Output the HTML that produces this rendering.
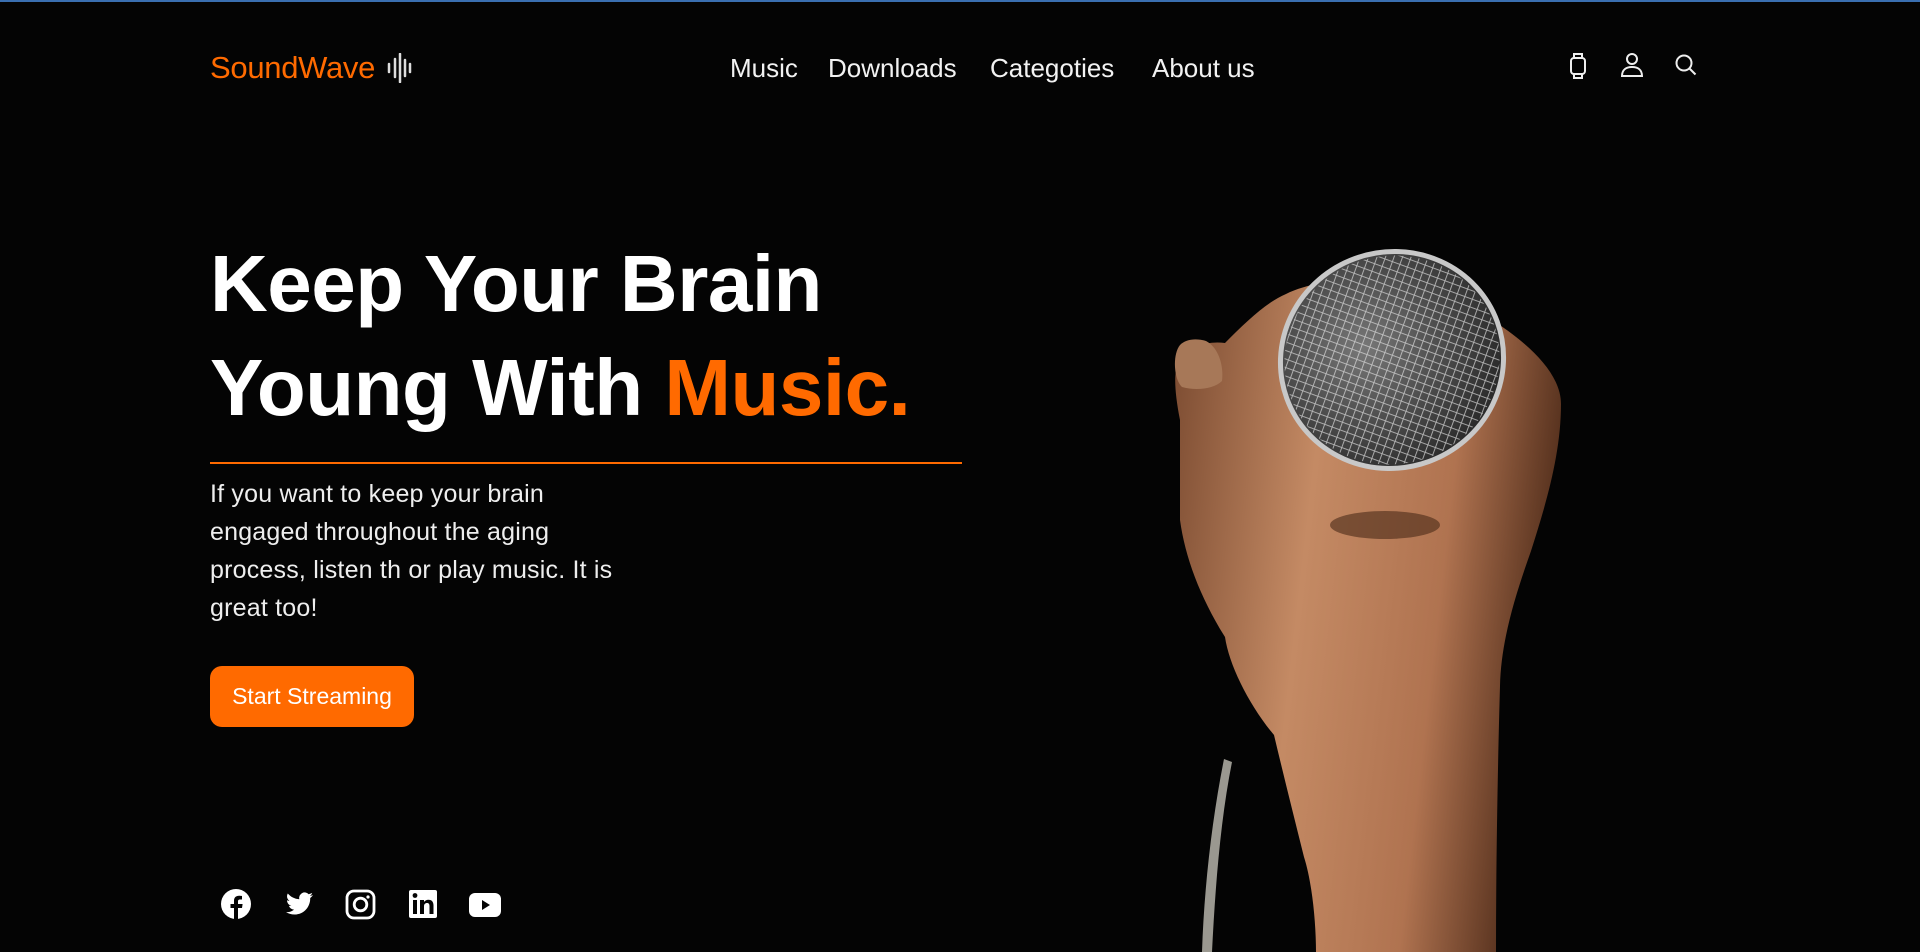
<!DOCTYPE html>
<html><head><meta charset="utf-8"><style>
*{margin:0;padding:0;box-sizing:border-box}
body{width:1920px;height:952px;background:#040404;overflow:hidden;position:relative;font-family:"Liberation Sans",sans-serif;color:#fff}
.top{position:absolute;top:0;left:0;width:1920px;height:2px;background:#3a6fb0}
.logo{position:absolute;left:210px;top:50px;font-size:31px;color:#ff6a00;letter-spacing:-0.3px}
.nav{position:absolute;top:53px;font-size:26px;color:#f2f2f2}
h1{position:absolute;left:210px;top:232px;font-size:80px;line-height:104px;font-weight:bold;letter-spacing:-0.5px}
h1 span{color:#ff6a00}
.line{position:absolute;left:210px;top:462px;width:752px;height:2px;background:#ff6a00}
p{position:absolute;left:210px;top:475px;font-size:25px;line-height:38px;color:#eee;white-space:nowrap;letter-spacing:0.2px}
.btn{position:absolute;left:210px;top:666px;width:204px;height:61px;background:#ff6a00;border-radius:12px;font-size:23px;line-height:61px;text-align:center}
svg{position:absolute}
</style></head><body>
<div class="top"></div>
<div class="logo">SoundWave</div>
<svg style="left:386px;top:53px" width="26" height="30" viewBox="0 0 26 30"><g stroke="#ddd" stroke-width="2.5" stroke-linecap="round"><line x1="3" y1="11" x2="3" y2="19"/><line x1="9" y1="6" x2="9" y2="24"/><line x1="14" y1="1" x2="14" y2="29"/><line x1="19" y1="7" x2="19" y2="23"/><line x1="24" y1="11" x2="24" y2="19"/></g></svg>
<div class="nav" style="left:730px">Music</div>
<div class="nav" style="left:828px">Downloads</div>
<div class="nav" style="left:990px">Categoties</div>
<div class="nav" style="left:1152px">About us</div>
<svg style="left:1568px;top:52px" width="22" height="28" viewBox="0 0 22 28" fill="none" stroke="#eee" stroke-width="2"><rect x="3" y="6" width="14" height="16" rx="3"/><path d="M6 6V2h8v4M6 22v4h8v-4"/></svg>
<svg style="left:1620px;top:52px" width="24" height="26" viewBox="0 0 24 26" fill="none" stroke="#eee" stroke-width="2"><circle cx="12" cy="7" r="5"/><path d="M2 24c0-6 4-9 10-9s10 3 10 9z"/></svg>
<svg style="left:1674px;top:53px" width="24" height="24" viewBox="0 0 24 24" fill="none" stroke="#eee" stroke-width="2"><circle cx="10" cy="10" r="7.5"/><path d="M15.5 15.5l6 6"/></svg>
<h1>Keep Your Brain<br>Young With <span>Music.</span></h1>
<div class="line"></div>
<p>If you want to keep your brain<br>engaged throughout the aging<br>process, listen th or play music. It is<br>great too!</p>
<div class="btn">Start Streaming</div>
<svg style="left:221px;top:889px" width="300" height="32" viewBox="0 0 300 32" fill="#fff">
<circle cx="15" cy="15" r="15"/><path d="M17 30V19h4l.6-4H17v-2.5c0-1.2.4-2 2-2h2V7c-.5 0-1.8-.2-3-.2-3 0-5 1.8-5 5V15H9.5v4H13v11z" fill="#040404"/>
<path d="M92 6c-1 .5-2 .8-3.2.9 1.2-.7 2-1.8 2.4-3-1 .6-2.3 1-3.5 1.3a5.5 5.5 0 0 0-9.4 5C73.7 10 69.6 7.8 66.8 4.5c-1.5 2.6-.7 5.8 1.7 7.4-.9 0-1.7-.3-2.5-.7 0 2.7 1.9 5 4.4 5.5-.8.2-1.7.3-2.5.1.7 2.2 2.8 3.8 5.2 3.8A11 11 0 0 1 65 23c2.5 1.6 5.4 2.5 8.4 2.5 10.2 0 15.8-8.5 15.8-15.8v-.7C90.3 8.3 91.3 7.2 92 6z"/>
<rect x="126" y="2" width="27" height="27" rx="7" fill="none" stroke="#fff" stroke-width="2.8"/><circle cx="139.5" cy="15.5" r="6.3" fill="none" stroke="#fff" stroke-width="2.8"/><circle cx="147" cy="8" r="1.6"/>
<rect x="188" y="1" width="28" height="28" rx="2"/><g fill="#040404"><rect x="192" y="11" width="4" height="14"/><circle cx="194" cy="6.5" r="2.4"/><path d="M199 11h4v2c1-1.5 2.5-2.3 4.5-2.3 3 0 5 1.8 5 5.8V25h-4v-8c0-2-.8-3-2.5-3s-3 1.2-3 3.2V25h-4z"/></g>
<rect x="248" y="4" width="32" height="24" rx="6"/><path d="M261 11v10l8-5z" fill="#040404"/>
</svg>
<svg style="left:1150px;top:240px" width="450" height="712" viewBox="1150 240 450 712">
<defs>
<linearGradient id="sk" x1="0" y1="0" x2="1" y2="0.2"><stop offset="0" stop-color="#7a4a30"/><stop offset=".4" stop-color="#c48a64"/><stop offset=".75" stop-color="#b07350"/><stop offset="1" stop-color="#5a3420"/></linearGradient>
<radialGradient id="mic" cx=".4" cy=".4" r=".7"><stop offset="0" stop-color="#777"/><stop offset=".6" stop-color="#444"/><stop offset="1" stop-color="#222"/></radialGradient>
<pattern id="mesh" width="8" height="8" patternUnits="userSpaceOnUse" patternTransform="rotate(40)"><path d="M0 0h8M0 0v8" stroke="#ddd" stroke-width="1.8"/></pattern>
</defs>
<path d="M1224 759c-12 60-20 130-22 193h10c3-60 8-130 20-190z" fill="#9a9890"/>
<path d="M1180 420c-6-30-6-50-2-53 10-22 30-26 47-24 20-20 40-40 61-49 40-20 120-20 160 0 60 30 115 70 115 110 0 50-15 100-30 147-16 45-30 90-31 135-2 70-4 170-4 266H1316c0-30-4-70-12-95-10-40-20-80-30-122-25-30-45-70-49-98-25-40-40-80-45-117z" fill="url(#sk)"/>
<path d="M1180 345c-8 10-6 35 2 42 14 4 32 2 40-6 2-16-4-34-16-40-10-3-20-2-26 4z" fill="#a77858"/>
<ellipse cx="1392" cy="360" rx="112" ry="108" transform="rotate(-20 1392 360)" fill="url(#mic)"/>
<ellipse cx="1392" cy="360" rx="108" ry="104" transform="rotate(-20 1392 360)" fill="url(#mesh)" opacity=".75"/>
<ellipse cx="1392" cy="360" rx="112" ry="108" transform="rotate(-20 1392 360)" fill="none" stroke="#c8c8c8" stroke-width="5"/>
<ellipse cx="1385" cy="525" rx="55" ry="14" fill="#4a2a18" opacity=".6"/>
</svg>
</body></html>
